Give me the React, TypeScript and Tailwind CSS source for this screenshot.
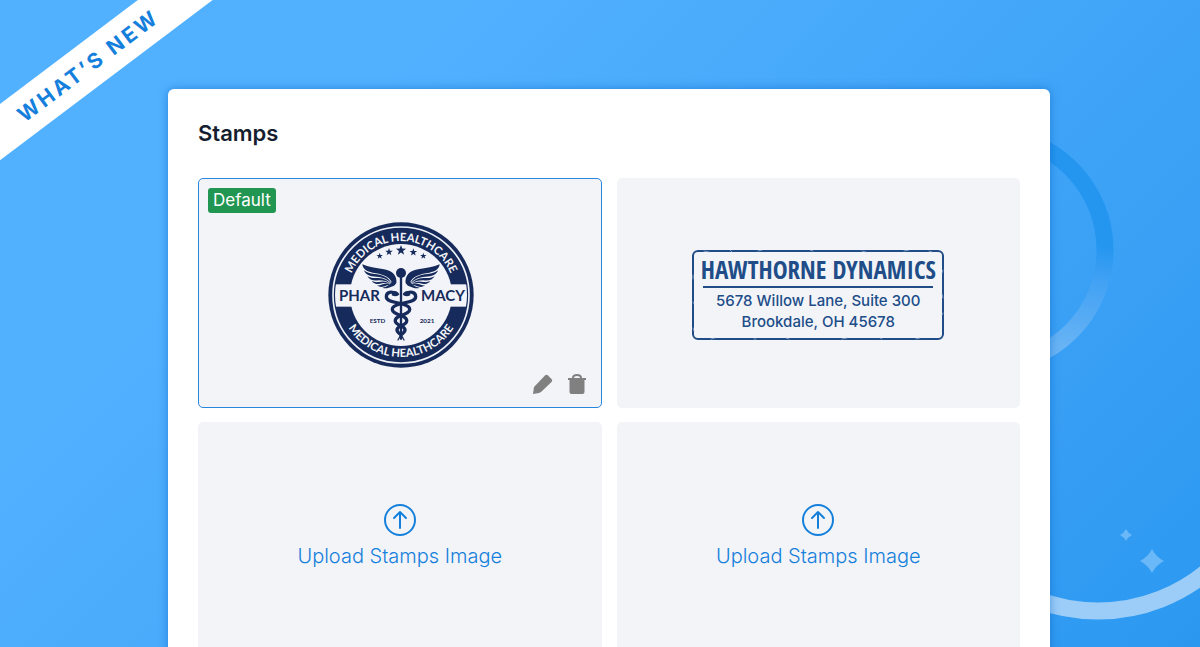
import type { ReactNode } from 'react';

const navy = '#162b5b';

const stars = [
  { x: 179, y: 124, r: 10 },
  { x: 207, y: 112, r: 12 },
  { x: 243, y: 107, r: 16 },
  { x: 280, y: 113, r: 12 },
  { x: 310, y: 124, r: 10 },
];

function starPoints(cx: number, cy: number, r: number) {
  return Array.from({ length: 10 }, (_, i) => {
    const radius = i % 2 === 0 ? r : r * 0.4;
    const angle = (Math.PI / 5) * i - Math.PI / 2;
    return `${cx + radius * Math.cos(angle)},${cy + radius * Math.sin(angle)}`;
  }).join(' ');
}

function Wing() {
  return (
    <g fill={navy}>
      <path d="M229 206 C232 184 218 168 192 164 C166 160 145 157 127 149 C128 162 140 171 158 174 C184 177 208 184 218 206 Z" />
      <path d="M132 167 C136 180 150 186 170 186 C190 188 204 194 214 206 C206 186 184 180 164 178 C150 177 140 174 132 167 Z" />
      <path d="M142 184 C148 196 160 199 176 197 C192 197 202 200 212 208 C202 193 186 190 170 190 C158 191 150 189 142 184 Z" />
      <path d="M155 199 C163 209 174 210 186 206 C196 204 204 206 211 210 C200 198 188 200 176 202 C168 203 161 202 155 199 Z" />
      <path d="M171 212 C180 219 190 217 198 213 C204 211 208 212 213 213 C204 205 196 206 188 209 C182 212 177 213 171 212 Z" />
      <path d="M187 219 C197 223 208 219 214 216 C221 214 226 211 229 204 L217 196 C214 208 202 217 187 219 Z" />
    </g>
  );
}

function PharmacySeal() {
  return (
    <svg viewBox="0 -5 480 480" className="size-40" role="img" aria-label="Pharmacy seal">
      <defs>
        <path id="seal-top" d="M81 241 A162 162 0 0 1 405 241" />
        <path id="seal-bottom" d="M57 241 A186 186 0 0 0 429 241" />
        <clipPath id="seal-disc">
          <circle cx="243" cy="241" r="198" />
        </clipPath>
      </defs>
      <circle cx="243" cy="241" r="218" fill={navy} />
      <circle cx="243" cy="241" r="204" fill="none" stroke="#eef1f8" strokeWidth="5" />
      <circle cx="243" cy="241" r="153" fill="#f3f4f9" />
      <rect x="40" y="209" width="406" height="67" fill="#f3f4f9" clipPath="url(#seal-disc)" />
      <g fontFamily="Lato, sans-serif" fontWeight="700" fontSize="34" fill="#f3f4f9" textAnchor="middle">
        <text><textPath href="#seal-top" startOffset="50%">MEDICAL HEALTHCARE</textPath></text>
        <text><textPath href="#seal-bottom" startOffset="50%">MEDICAL HEALTHCARE</textPath></text>
      </g>
      {stars.map((star) => (
        <polygon key={star.x} points={starPoints(star.x, star.y, star.r)} fill={navy} />
      ))}
      <Wing />
      <g transform="translate(486 0) scale(-1 1)">
        <Wing />
      </g>
      <g fill="none" stroke={navy} strokeLinecap="round">
        <path d="M243 180 V372" strokeWidth="7" />
        <path d="M227 238 C216 228 199 232 199 246 C199 260 222 262 243 267 C280 276 276 292 243 303 C218 312 222 326 243 334 C262 342 256 352 243 360" strokeWidth="10" />
        <path d="M259 238 C270 228 287 232 287 246 C287 260 264 262 243 267 C206 276 210 292 243 303 C268 312 264 326 243 334 C224 342 230 352 243 360" strokeWidth="10" />
        <path d="M243 360 L234 376 M243 360 L252 376" strokeWidth="4" />
      </g>
      <path d="M217 231 C224 226 235 230 238 239 C234 246 224 246 215 242 Z" fill={navy} />
      <path d="M269 231 C262 226 251 230 248 239 C252 246 262 246 271 242 Z" fill={navy} />
      <circle cx="243" cy="175" r="15" fill={navy} />
      <g fontFamily="Lato, sans-serif" fontWeight="700" fill={navy}>
        <text x="57" y="259" fontSize="45">PHAR</text>
        <text x="303" y="259" fontSize="45">MACY</text>
        <text x="149" y="325" fontSize="19">ESTD</text>
        <text x="299" y="325" fontSize="19">2021</text>
      </g>
    </svg>
  );
}

function AddressStamp() {
  return (
    <div className="relative mt-1 flex h-[90px] w-[252px] flex-col items-center rounded-md border-2 border-[#204d88] text-[#204d88]">
      <svg viewBox="0 0 252 90" className="absolute -inset-0.5 h-[90px] w-[252px]" fill="none" stroke="#a9bbd3" strokeWidth="0.7" strokeLinecap="round" aria-hidden="true">
        <path d="M12 1 l5 1 M38 0 l2 2 M66 1 l4 -1 M118 0 l3 1 M170 1 l4 1 M212 1 l5 -1 M237 1 l3 1 M251 20 l-1 3 M250 44 l1 4 M251 63 l-1 2 M1 25 l0 4 M1 52 l1 2 M1 78 l1 3 M19 89 l4 -1 M62 89 l2 0 M94 88 l3 1 M150 89 l5 -1 M188 88 l2 1 M224 89 l4 -1" />
      </svg>
      <div className="flex h-9 w-[230px] justify-center border-b-2 border-[#204d88] font-['Open_Sans_Condensed','Noto_Sans_ExtraCondensed','Roboto_Condensed','Liberation_Sans_Narrow',sans-serif] text-[25px] leading-[34px] font-bold whitespace-nowrap">
        HAWTHORNE DYNAMICS
      </div>
      <address className="mt-0.5 text-center text-[15px] leading-[21px] font-medium whitespace-nowrap not-italic">
        5678 Willow Lane, Suite 300
        <br />
        Brookdale, OH 45678
      </address>
    </div>
  );
}

function StampCard({ selected = false, children }: { selected?: boolean; children: ReactNode }) {
  return (
    <div
      className={`relative flex h-[230px] items-center justify-center rounded-[5px] border bg-[#f3f4f8] ${
        selected ? 'border-[#2a86dc]' : 'border-[#f3f4f8]'
      }`}
    >
      {children}
    </div>
  );
}

function UploadButton() {
  return (
    <button type="button" className="flex size-full flex-col items-center justify-center gap-1 pt-0.5 text-xl leading-8 font-[350] text-[#1580dc]">
      <svg viewBox="0 0 32 32" className="size-8" fill="none" stroke="currentColor" strokeWidth="2" strokeLinecap="round" strokeLinejoin="round" aria-hidden="true">
        <circle cx="16" cy="16" r="15" />
        <path d="M16 24 V8 M10 14 L16 8 L22 14" />
      </svg>
      Upload Stamps Image
    </button>
  );
}

function Backdrop() {
  return (
    <svg viewBox="0 0 170 647" className="absolute top-0 right-0 h-[647px] w-[170px]" fill="none" aria-hidden="true">
      <defs>
        <linearGradient id="ring-fade" gradientUnits="userSpaceOnUse" x1="60" y1="145" x2="25" y2="360">
          <stop offset="0" stopColor="#2596f0" />
          <stop offset="0.45" stopColor="#2596f0" />
          <stop offset="0.62" stopColor="#43a2f4" />
          <stop offset="1" stopColor="#6fb7f5" />
        </linearGradient>
      </defs>
      <circle cx="-40" cy="250" r="115" stroke="url(#ring-fade)" strokeWidth="17" />
      <path d="M-103 440 A171 171 0 0 0 239 440" stroke="#9bcdf8" strokeWidth="17" />
      <path d="M96 529 Q98 533 102 535 Q98 537 96 541 Q94 537 90 535 Q94 533 96 529 Z" fill="#6bb8f8" />
      <path d="M122 549 Q126 557 134 561 Q126 565 122 573 Q118 565 110 561 Q118 557 122 549 Z" fill="#6bb8f8" />
    </svg>
  );
}

function App() {
  return (
    <div className="relative h-screen overflow-hidden bg-linear-135 from-[#52b1ff] from-25% to-[#2b98f0] pt-[89px] pr-[12.5%] pl-[14%] font-['Inter',sans-serif]">
      <Backdrop />

      {/* Corner ribbon */}
      <div className="absolute top-[44px] -left-[63px] flex h-[45px] w-[300px] -rotate-37 items-center justify-center bg-white pl-[3px] text-[21px] font-bold tracking-[3px] text-[#1580dc]">
        WHAT’S NEW
      </div>

      <main className="relative rounded-md bg-white p-[30px] shadow-[0_0_10px_rgba(0,90,190,0.5)]">
        <h1 className="mb-[30px] text-[22px] leading-[29px] font-semibold text-[#151e2e]">Stamps</h1>
        <div className="grid grid-cols-2 gap-x-[15px] gap-y-3.5">
          <StampCard selected>
            <span className="absolute top-[9px] left-[9px] rounded-[3px] bg-[#219653] px-[5px] text-[17px] leading-[25px] text-white">
              Default
            </span>
            <PharmacySeal />
            <div className="absolute right-3.5 bottom-3 flex gap-3.5 text-[#808080]">
              <button type="button" aria-label="Edit stamp">
                <svg viewBox="0 0 22 22" className="size-[22px]" fill="currentColor" aria-hidden="true">
                  <path d="M2 21 L3 14 L14 2.500 Q15.500 1 17 2.500 L20.500 6 Q22 7.500 20.500 9 L10 19 L8 20 Z" />
                </svg>
              </button>
              <button type="button" aria-label="Delete stamp">
                <svg viewBox="0 0 20 22" className="h-[22px] w-5" fill="currentColor" aria-hidden="true">
                  <path d="M1 5 H19 V7 H17.500 V19 Q17.500 21 15.500 21 H4.500 Q2.500 21 2.500 19 V7 H1 Z" />
                  <path d="M6 5 Q6 2 10 2 Q14 2 14 5" fill="none" stroke="currentColor" strokeWidth="2" />
                </svg>
              </button>
            </div>
          </StampCard>
          <StampCard>
            <AddressStamp />
          </StampCard>
          <StampCard>
            <UploadButton />
          </StampCard>
          <StampCard>
            <UploadButton />
          </StampCard>
        </div>
      </main>
    </div>
  );
}

export default App;
